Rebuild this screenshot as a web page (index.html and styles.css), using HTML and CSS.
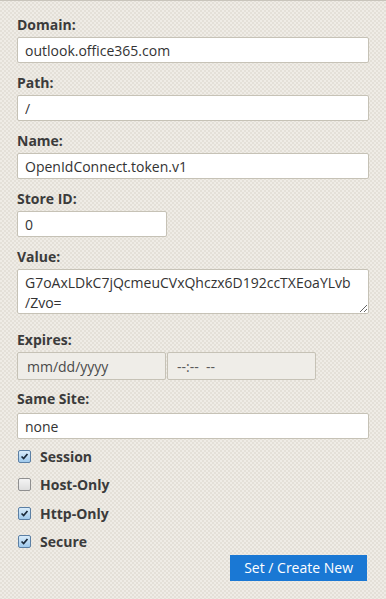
FILE: index.html
```html
<!DOCTYPE html>
<html>
<head>
<meta charset="utf-8">
<link rel="stylesheet" href="styles.css">
</head>
<body>
<div class="form">
  <div class="field">
    <label class="lbl">Domain:</label>
    <input class="inp" type="text" value="outlook.office365.com">
  </div>
  <div class="field">
    <label class="lbl">Path:</label>
    <input class="inp" type="text" value="/">
  </div>
  <div class="field">
    <label class="lbl">Name:</label>
    <input class="inp" type="text" value="OpenIdConnect.token.v1">
  </div>
  <div class="field">
    <label class="lbl">Store ID:</label>
    <input class="inp short" type="text" value="0">
  </div>
  <div class="field field-value">
    <label class="lbl">Value:</label>
    <textarea class="inp area">G7oAxLDkC7jQcmeuCVxQhczx6D192ccTXEoaYLvb
/Zvo=</textarea>
  </div>
  <div class="field field-expires">
    <label class="lbl">Expires:</label>
    <div class="dt-row">
      <input class="inp dis" type="text" value="mm/dd/yyyy" disabled>
      <input class="inp dis time" type="text" value="--:--  --" disabled>
    </div>
  </div>
  <div class="field field-site">
    <label class="lbl">Same Site:</label>
    <input class="inp" type="text" value="none">
  </div>
  <div class="checks">
    <div class="chk-row"><span class="box on"><svg viewBox="0 0 13 13"><path d="M3 6.5 L5.5 9 L10 3.5" fill="none" stroke="#1b2a3a" stroke-width="2"/></svg></span><span class="chk-lbl">Session</span></div>
    <div class="chk-row"><span class="box"></span><span class="chk-lbl">Host-Only</span></div>
    <div class="chk-row"><span class="box on"><svg viewBox="0 0 13 13"><path d="M3 6.5 L5.5 9 L10 3.5" fill="none" stroke="#1b2a3a" stroke-width="2"/></svg></span><span class="chk-lbl">Http-Only</span></div>
    <div class="chk-row"><span class="box on"><svg viewBox="0 0 13 13"><path d="M3 6.5 L5.5 9 L10 3.5" fill="none" stroke="#1b2a3a" stroke-width="2"/></svg></span><span class="chk-lbl">Secure</span></div>
  </div>
  <div class="actions">
    <button class="btn">Set / Create New</button>
  </div>
</div>
</body>
</html>
```
FILE: styles.css
```css
html, body {
  margin: 0;
  padding: 0;
}
body {
  width: 386px;
  height: 599px;
  overflow: hidden;
  font-family: "Open Sans", "Noto Sans", sans-serif;
  color: #3a3a3a;
  background-color: #efece6;
  background-image:
    linear-gradient(45deg, #e4e0d8 25%, transparent 25%, transparent 75%, #e4e0d8 75%),
    linear-gradient(45deg, #e4e0d8 25%, transparent 25%, transparent 75%, #e4e0d8 75%);
  background-size: 4px 4px;
  background-position: 0 0, 2px 2px;
  border-top: 1px solid #c9c5bc;
  box-sizing: border-box;
}
.form {
  padding: 15px 17px 0 17px;
  display: flex;
  flex-direction: column;
}
.field {
  display: flex;
  flex-direction: column;
  margin-bottom: 11px;
}
.lbl {
  font-weight: 700;
  font-size: 14px;
  line-height: 17px;
  color: #3b3b3b;
  margin-bottom: 4px;
}
.inp {
  box-sizing: border-box;
  height: 26px;
  width: 352px;
  border: 1px solid #c6c2b6;
  border-radius: 2px;
  background: #fff;
  font-family: "Open Sans", "Noto Sans", sans-serif;
  font-size: 14px;
  color: #333;
  padding: 0 7px;
  margin: 0;
  outline: none;
}
.short {
  width: 150px;
}
.area {
  height: 45px;
  line-height: 20px;
  padding: 3px 7px 0 7px;
  resize: vertical;
  overflow: hidden;
  white-space: pre;
}
.field-value {
  margin-bottom: 17px;
}
.field-expires {
  margin-bottom: 10px;
}
.field-site .lbl {
  margin-bottom: 6px;
}
.dt-row {
  display: flex;
  gap: 1px;
}
.dis {
  width: 149px;
  height: 28px;
  background: #efede8;
  color: #4a4a4a;
  padding: 0 9px;
}
.dis.time {
  color: #5a5a5a;
}
.checks {
  display: flex;
  flex-direction: column;
  gap: 9.3px;
  padding-left: 1px;
  margin-top: -3px;
}
.chk-row {
  display: flex;
  align-items: center;
  height: 19px;
}
.box {
  box-sizing: border-box;
  width: 13px;
  height: 13px;
  border: 1px solid #8f8f8f;
  border-radius: 2px;
  background: linear-gradient(#f4f4f4, #dedede);
  margin-right: 9px;
  display: flex;
}
.box.on {
  border-color: #5b7fa4;
  background: linear-gradient(#d9ecfa, #9fc9ec);
}
.box svg {
  width: 11px;
  height: 11px;
}
.chk-lbl {
  font-weight: 700;
  font-size: 14px;
  color: #3b3b3b;
}
.actions {
  display: flex;
  justify-content: flex-end;
  margin-top: 4px;
  padding-right: 2px;
}
.btn {
  background: #1a78d4;
  color: #fff;
  border: none;
  border-radius: 0;
  height: 26px;
  padding: 0 14px;
  font-family: "Open Sans", "Noto Sans", sans-serif;
  font-size: 14px;
}
```
